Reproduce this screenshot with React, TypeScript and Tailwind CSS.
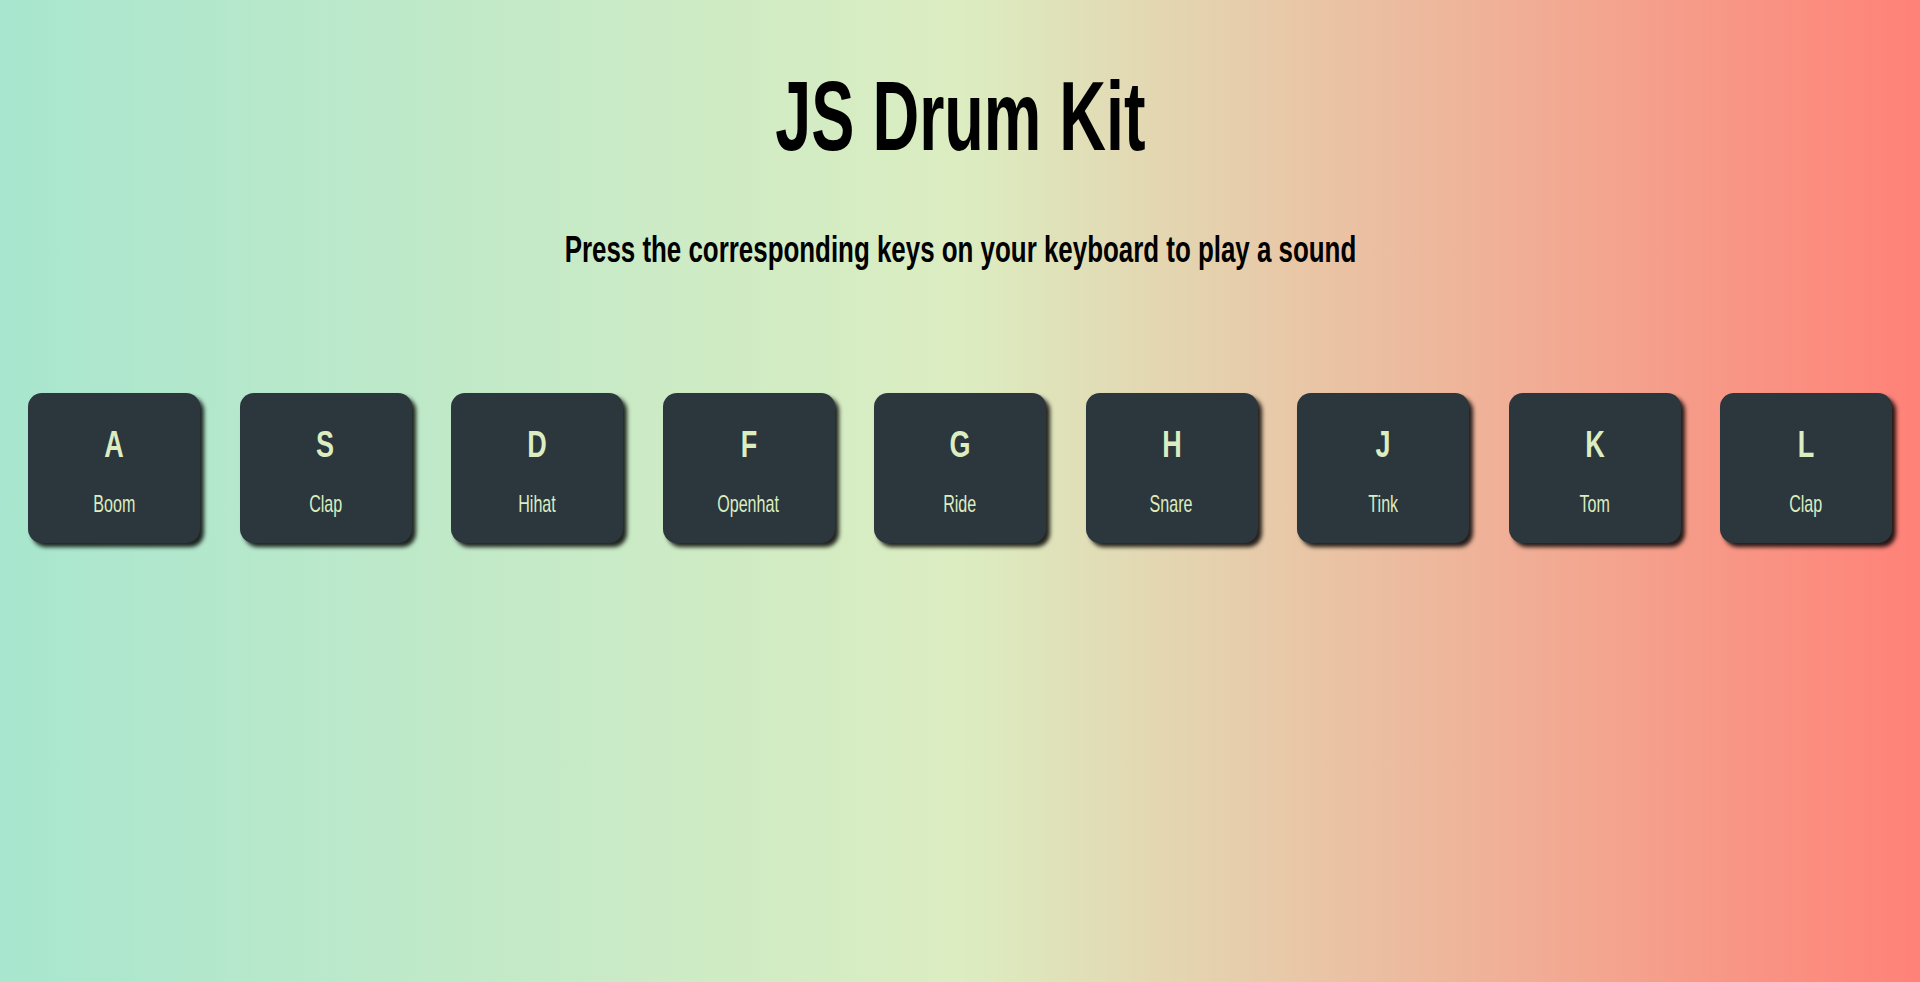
import React from "react";

const keys = [
  ["A", "Boom"],
  ["S", "Clap"],
  ["D", "Hihat"],
  ["F", "Openhat"],
  ["G", "Ride"],
  ["H", "Snare"],
  ["J", "Tink"],
  ["K", "Tom"],
  ["L", "Clap"],
];

export default function App() {
  return (
    <div
      className="w-full h-[982px] bg-[linear-gradient(to_right,#a8e6cf,#dcedc1,#ff8177)] flex flex-col items-center text-black"
      style={{ fontFamily: '"Liberation Sans Narrow", "Liberation Sans", sans-serif' }}
    >
      <h1 className="mt-[67px] text-[98px] leading-none font-bold">
        <span className="inline-block scale-x-[0.66]">JS Drum Kit</span>
      </h1>
      <h2 className="mt-[66px] text-[37px] leading-none font-bold">
        <span className="inline-block scale-x-[0.7]">Press the corresponding keys on your keyboard to play a sound</span>
      </h2>
      <div className="mt-[125px] w-full px-[28px] flex justify-between">
        {keys.map(([k, label], i) => (
          <div
            key={i}
            className="w-[172px] h-[150px] rounded-[14px] bg-[#2b363d] shadow-[4px_4px_4px_rgba(0,0,0,0.85)] flex flex-col items-center text-[#dcedc1]"
          >
            <div className="mt-[34px] text-[36px] leading-none font-bold">
              <span className="inline-block scale-x-[0.75]">{k}</span>
            </div>
            <div className="mt-[29px] text-[24px] leading-none">
              <span className="inline-block scale-x-[0.67]">{label}</span>
            </div>
          </div>
        ))}
      </div>
    </div>
  );
}
